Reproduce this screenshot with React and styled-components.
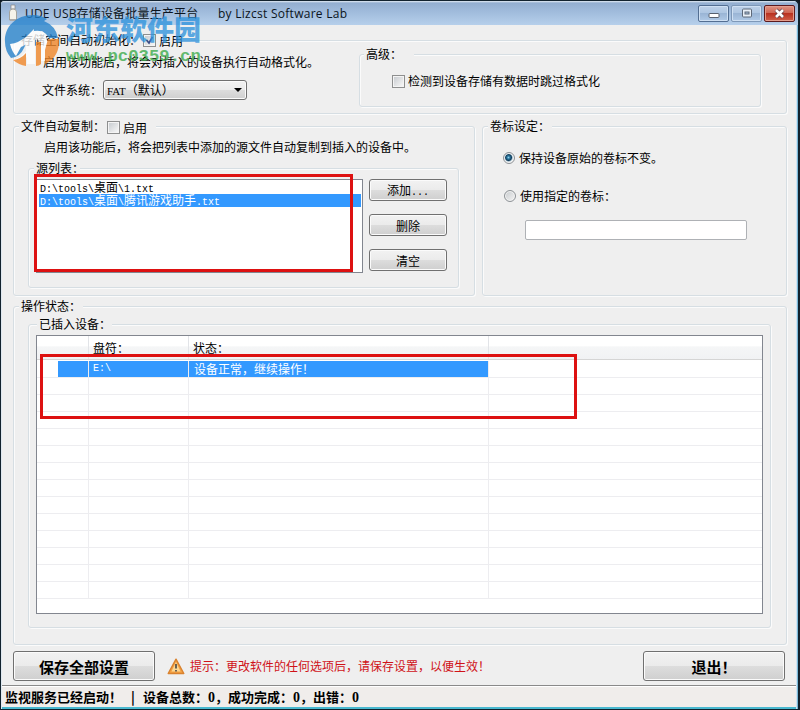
import React from 'react';
import styled, { createGlobalStyle, css } from 'styled-components';

const Global = createGlobalStyle`
  * { box-sizing: border-box; }
  body { margin: 0; background: #101820; overflow: hidden; }
`;

const Window = styled.div`
  position: relative;
  width: 800px;
  height: 710px;
  display: flex;
  flex-direction: column;
  background: #efefef;
  border: solid #12222e;
  border-width: 1px 2px 1px 1px;
  border-radius: 4px 6px 0 0;
  box-shadow: inset 1px 0 #dfe8f0, inset -1px 0 #79b9d8, inset -2px 0 #cfe2f2, inset 0 -2px #48b8cf;
  font: 12px/14px "Noto Sans CJK SC", sans-serif;
  color: #000;
  white-space: nowrap;
`;
const TitleBar = styled.header`
  height: 24px;
  flex: none;
  display: flex;
  align-items: center;
  padding: 0 3px 0 6px;
  border-radius: 4px 5px 0 0;
  background: linear-gradient(#e3ebf4 0, #93aed0 2px, #9fbadb 10px, #b6cfeb 100%);
`;
const AppIcon = styled.svg`width: 12px; height: 18px; margin-right: 6px;`;
const TitleText = styled.div`
  width: ${p => p.$w}px;
  padding-top: 1px;
  font: 12px/16px "Open Sans", "Noto Sans CJK SC", sans-serif;
  letter-spacing: ${p => p.$ls || 0}px;
  color: #0b1420;
`;
const Caption = styled.div`display: flex; margin-left: auto; gap: 2px;`;
const CaptionButton = styled.button`
  width: 31px;
  height: 17px;
  padding: 0;
  display: grid;
  place-items: center;
  border: 1px solid ${p => (p.$close ? '#5c1a1e' : p.$dim ? '#7e98b8' : '#536e92')};
  border-radius: 2px;
  box-shadow: inset 0 0 0 1px ${p => (p.$close ? '#e59d8d' : '#cfe0f3')};
  background: ${p => (p.$close
    ? 'linear-gradient(#df9383, #cf6654 45%, #b93221 50%, #d0604a)'
    : 'linear-gradient(#bdd0e8, #aec6e2 45%, #9ab5d5 50%, #b0c9e6)')};
`;

const Group = styled.section`
  flex: none;
  width: ${p => p.$w}px;
  height: ${p => p.$h}px;
  margin: ${p => p.$m || 0};
  border: 1px solid #d6dee3;
  border-radius: 3px;
  box-shadow: inset 1px 1px #fbfbfb, 1px 1px #fbfbfb;
`;
const Legend = styled.div`
  display: flex;
  align-items: center;
  width: ${p => p.$w}px;
  height: 18px;
  margin: -10px 0 0 ${p => p.$x ?? 5}px;
  padding-left: 2px;
  background: #efefef;
`;
const Row = styled.div`
  display: flex;
  align-items: ${p => p.$align || 'center'};
  margin: ${p => p.$m || 0};
  gap: ${p => p.$gap || 0}px;
`;
const Text = styled.p`margin: ${p => p.$m || 0}; height: 14px;`;
const Content = styled.main`padding-left: 12px; flex: 1;`;

const Check = styled.span`
  width: 13px;
  height: 13px;
  flex: none;
  display: grid;
  place-items: center;
  border: 1px solid #8e8f8f;
  padding: 1px;
  background: linear-gradient(135deg, #c9cdd1, #f6f6f6) content-box, #f4f4f4;
`;
const CheckLabel = styled.span`padding-top: 1px;`;
const Radio = styled.span`
  width: 12px;
  height: 12px;
  flex: none;
  border: 1px solid #8d9296;
  border-radius: 50%;
  background: ${p => (p.$on
    ? 'radial-gradient(circle at 4.5px 4.5px, #8fd0ea 0, #2b779f 1.5px, #123e5c 3px, #c7d9e3 4.2px, #f4f4f4 5px)'
    : 'linear-gradient(135deg, #c6cacd, #f5f5f5)')};
  box-shadow: inset 0 0 0 1px #f4f4f4;
`;
const raised = css`
  border: 1px solid #707070;
  border-radius: 3px;
  box-shadow: inset 0 0 0 1px #fbfbfb;
  background: linear-gradient(#f2f2f2, #ebebeb 49%, #dddddd 50%, #cfcfcf);
`;
const Select = styled.div`
  ${raised}
  width: 144px;
  height: 20px;
  display: flex;
  align-items: center;
  justify-content: space-between;
  padding: 0 4px 0 3px;
`;
const Button = styled.button`
  ${raised}
  flex: none;
  width: ${p => (p.$big ? 142 : 78)}px;
  height: ${p => (p.$big ? 30 : 22)}px;
  padding: 2px 0 0;
  color: #000;
  font: ${p => (p.$big ? 'bold 15px/20px' : '12px/14px')} "Noto Sans CJK SC", sans-serif;
`;
const ButtonStack = styled.div`display: flex; flex-direction: column; gap: 13px;`;
const Mono = styled.span`
  font-family: "Liberation Mono", monospace;
  font-size: 10px;
`;
const SerifText = styled.span`font-family: "Liberation Serif", serif; font-size: ${p => p.$s}px;`;

const ListBox = styled.div`
  width: 327px;
  height: 94px;
  padding: 1px 1px 1px 2px;
  border: 1px solid #82868f;
  background: #fff;
`;
const ListItem = styled.div`
  height: 13px;
  line-height: 11px;
  padding-left: 1px;
  ${p => p.$selected && 'background: #3399ff; color: #fff;'}
`;
const Input = styled.input`
  display: block;
  width: 222px;
  height: 20px;
  margin: 17px 0 0 42px;
  border: 1px solid #aeb1b5;
  border-radius: 2px;
  background: #fff;
`;

const columns = '52px 100px 300px 1fr';
const Table = styled.div`
  width: 727px;
  height: 279px;
  margin: 2px 0 0 7px;
  border: 1px solid #82868f;
  background: #fff;
`;
const HeadRow = styled.div`
  display: grid;
  grid-template-columns: ${columns};
  height: 24px;
  margin-bottom: 1px;
  border-bottom: 1px solid #d5d5d5;
  background: linear-gradient(#fff 45%, #f5f6f7 46%, #f1f2f4);
`;
const HeadCell = styled.div`
  padding: 5px 0 0 4px;
  border-right: 1px solid #e2e4e8;
  &:last-child { border-right: 0; }
`;
const BodyRow = styled.div`
  display: grid;
  grid-template-columns: ${columns};
  height: 17px;
  border-bottom: 1px solid #ededf0;
`;
const Cell = styled.div`
  display: flex;
  align-items: center;
  padding-left: ${p => p.$pad || 4}px;
  border-right: 1px solid #ededf0;
  margin-left: ${p => p.$indent || 0}px;
  ${p => p.$selected && 'background: #3399ff; color: #fff;'}
  &:last-child { border-right: 0; }
`;

const Footer = styled.footer`display: flex; align-items: center; width: 772px; height: 30px; margin-top: 6px;`;
const Warn = styled.svg`width: 18px; height: 17px; margin: 0 5px 0 12px;`;
const Tip = styled.span`color: #d01218;`;
const StatusBar = styled.div`
  flex: none;
  height: 22px;
  margin: 0 2px 2px 1px;
  padding: 1px 0 0 3px;
  border-top: 1px solid #8a8a8a;
  box-shadow: inset 0 1px #fff;
  background: #f0edeb;
  font-size: 13px;
  font-weight: bold;
  line-height: 19px;
  display: flex;
`;
const StatusPart = styled.div`width: ${p => p.$w}px;`;

const Marker = styled.div`
  position: absolute;
  left: ${p => p.$x - 1}px;
  top: ${p => p.$y - 1}px;
  width: ${p => p.$w}px;
  height: ${p => p.$h}px;
  border: 3px solid #dd1111;
  pointer-events: none;
`;
const Watermark = styled.div`
  position: absolute;
  left: 3px;
  top: 11px;
  display: flex;
  opacity: .78;
  pointer-events: none;
`;
const MarkName = styled.div`
  height: 35px;
  font: 900 27px/34px "Noto Sans CJK SC", sans-serif;
  color: #2f93dc;
`;
const MarkUrl = styled.div`
  font: bold 17.3px/20px "Liberation Mono", monospace;
  color: #3bab4b;
`;

export default function App() {
  return (
    <Window>
      <Global />
      <TitleBar>
        <AppIcon viewBox="0 0 12 18">
          <path d="M4 1h4v4H4z" fill="#eee" stroke="#888" strokeWidth=".7" />
          <path d="M2.500 8q0-3 3.500-3t3.500 3v8h-7z" fill="#f6f3ea" stroke="#98948a" strokeWidth=".8" />
          <path d="M3 15h6v2H3z" fill="#aaa" />
        </AppIcon>
        <TitleText $w={193} $ls={0.18}>UDE USB存储设备批量生产平台</TitleText>
        <TitleText $w={140} $ls={0.27}>by Lizcst Software Lab</TitleText>
        <Caption>
          <CaptionButton aria-label="最小化">
            <svg width="12" height="9"><rect x="1" y="4.500" width="10" height="4" rx="1" fill="#fff" stroke="#58616e" /></svg>
          </CaptionButton>
          <CaptionButton $dim aria-label="最大化">
            <svg width="12" height="10"><rect x="1.500" y="1" width="9" height="8" rx="1" fill="#e8eff7" stroke="#5d6878" /><rect x="4" y="4" width="4" height="2" fill="#a8bfda" stroke="#5d6878" /></svg>
          </CaptionButton>
          <CaptionButton $close aria-label="关闭">
            <svg width="13" height="11"><path d="M3 2l7 7M10 2L3 9" stroke="#5b3a42" strokeWidth="4" /><path d="M3 2l7 7M10 2L3 9" stroke="#fff" strokeWidth="2.600" /></svg>
          </CaptionButton>
        </Caption>
      </TitleBar>

      <Content>
        <Group $w={774} $h={74} $m="15px 0 0">
          <Legend $w={172}>
            存储空间自动初始化：
            <Row $m="0 0 0 2px" $gap={3}>
              <Check><svg width="9" height="9"><path d="M1.500 4l2.500 3L7.500 1" fill="none" stroke="#3c4f87" strokeWidth="1.800" /></svg></Check>
              <CheckLabel>启用</CheckLabel>
            </Row>
          </Legend>
          <Row $align="flex-start">
            <div>
              <Text $m="6px 0 0 29px">启用该功能后，将会对插入的设备执行自动格式化。</Text>
              <Row $m="11px 0 0 28px" $gap={1}>
                文件系统：
                <Select>
                  <span><SerifText $s={11}>FAT</SerifText>（默认）</span>
                  <svg width="8" height="4"><path d="M0 0h8L4 4z" fill="#000" /></svg>
                </Select>
              </Row>
            </div>
            <Group $w={402} $h={53} $m="5px 0 0 40px">
              <Legend $w={50} $x={4}>高级：</Legend>
              <Row $m="11px 0 0 32px" $gap={3}><Check />检测到设备存储有数据时跳过格式化</Row>
            </Group>
          </Row>
        </Group>

        <Row $m="12px 0 0" $gap={7} $align="flex-start">
          <Group $w={462} $h={170}>
            <Legend $w={137}>
              文件自动复制：<Row $m="2px 0 0 2px" $gap={3}><Check /><CheckLabel>启用</CheckLabel></Row>
            </Legend>
            <Text $m="5px 0 0 30px">启用该功能后，将会把列表中添加的源文件自动复制到插入的设备中。</Text>
            <Group $w={431} $h={120} $m="14px 0 0 14px">
              <Legend $w={46}>源列表：</Legend>
              <Row $m="2px 0 0 7px" $gap={6} $align="flex-start">
                <ListBox>
                  <ListItem><Mono>D:\tools\</Mono>桌面<Mono>\1.txt</Mono></ListItem>
                  <ListItem $selected><Mono>D:\tools\</Mono>桌面<Mono>\</Mono>腾讯游戏助手<Mono>.txt</Mono></ListItem>
                </ListBox>
                <ButtonStack>
                  <Button>添加<Mono>...</Mono></Button>
                  <Button>删除</Button>
                  <Button>清空</Button>
                </ButtonStack>
              </Row>
            </Group>
          </Group>
          <Group $w={305} $h={170}>
            <Legend $w={64}>卷标设定：</Legend>
            <Row $m="16px 0 0 20px" $gap={4}><Radio $on />保持设备原始的卷标不变。</Row>
            <Row $m="24px 0 0 21px" $gap={4}><Radio />使用指定的卷标：</Row>
            <Input />
          </Group>
        </Row>

        <Group $w={774} $h={339} $m="10px 0 0">
          <Legend $w={64}>操作状态：</Legend>
          <Group $w={743} $h={304} $m="9px 0 0 14px">
            <Legend $w={75} $x={8}>已插入设备：</Legend>
            <Table>
              <HeadRow>
                <HeadCell /><HeadCell>盘符：</HeadCell><HeadCell>状态：</HeadCell><HeadCell />
              </HeadRow>
              <BodyRow>
                <Cell $selected $indent={21} />
                <Cell $selected><Mono>E:\</Mono></Cell>
                <Cell $selected $pad={5}>设备正常，继续操作！</Cell>
                <Cell />
              </BodyRow>
              {Array.from({ length: 13 }, (_, i) => (
                <BodyRow key={i}><Cell /><Cell /><Cell /><Cell /></BodyRow>
              ))}
            </Table>
          </Group>
        </Group>

        <Footer>
          <Button $big>保存全部设置</Button>
          <Warn viewBox="0 0 18 17">
            <path d="M9 1.200L16.800 15.500H1.200z" fill="#f3a043" stroke="#d9822f" strokeWidth="1.400" strokeLinejoin="round" />
            <path d="M9 4L13.500 13.500H4.500z" fill="#fbd794" />
            <path d="M9 6v4.500M9 12v1.600" stroke="#444" strokeWidth="1.600" />
          </Warn>
          <Tip>提示：更改软件的任何选项后，请保存设置，以便生效！</Tip>
          <Row $m="0 0 0 auto"><Button $big>退出！</Button></Row>
        </Footer>
      </Content>

      <StatusBar>
        <StatusPart $w={126}>监视服务已经启动！</StatusPart>
        <StatusPart $w={12}>|</StatusPart>
        <StatusPart>设备总数：<SerifText $s={14}>0</SerifText>，成功完成：<SerifText $s={14}>0</SerifText>，出错：<SerifText $s={14}>0</SerifText></StatusPart>
      </StatusBar>

      <Marker $x={34} $y={174} $w={319} $h={98} />
      <Marker $x={40} $y={354} $w={537} $h={65} />
      <Watermark>
        <svg width="62" height="58" viewBox="4 12 62 58">
          <path d="M5 42C4 27 16 15 33 15q8 0 14 4l-3 2q12 5 14 17h-9q-3-5-7-7l-6 3q-9 6-12 14-4 9-13 10Q5 51 5 42z" fill="#2380cb" />
          <path d="M10 44q9-1 17-8l7-7-1 9q-4 6-12 9l-5 9q-4-4-6-12z" fill="#fff" />
          <path d="M11 60q9-1 15-9V38q3-4 8-7 12-2 13 9v21h-8V41q-1-3-4-1v24h-8v-7q-4 5-16 3z" fill="#fff" />
          <path d="M13 60q8-1 13-7v13q-7-1-13-6zM36 42h5v22q-2 2-5 2zM48 39h11q1 18-14 25V50z" fill="#f08424" />
        </svg>
        <div>
          <MarkName>河东软件园</MarkName>
          <MarkUrl>www.pc0359.cn</MarkUrl>
        </div>
      </Watermark>
    </Window>
  );
}
